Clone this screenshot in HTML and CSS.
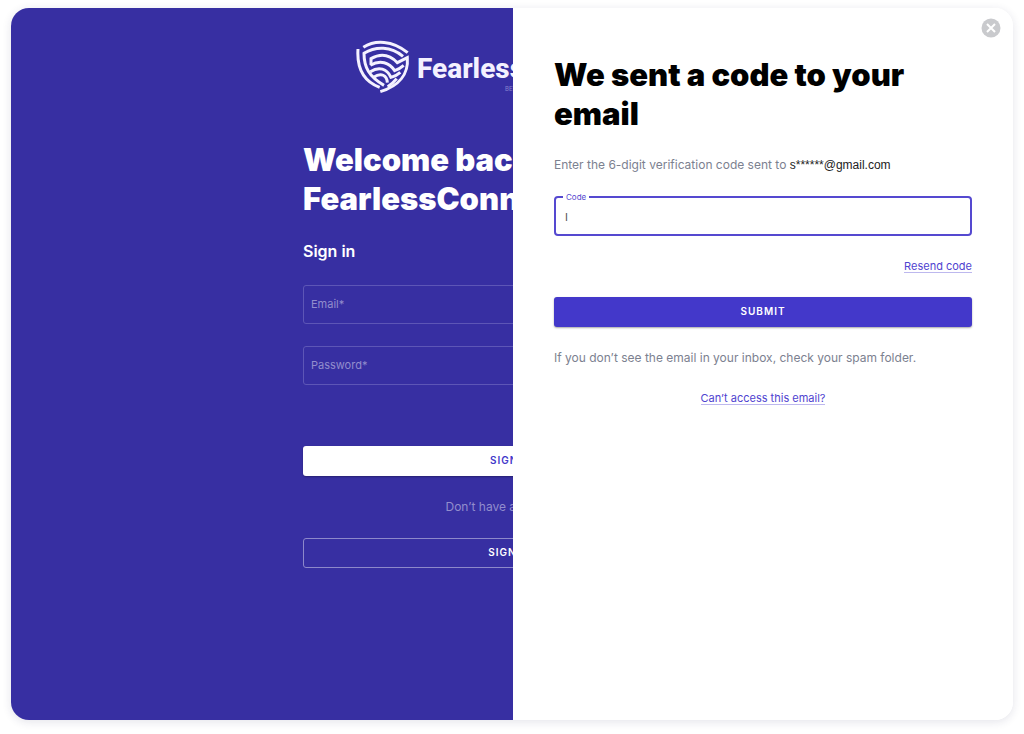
FILE: index.html
```html
<!DOCTYPE html>
<html lang="en">
<head>
<meta charset="utf-8">
<meta name="viewport" content="width=device-width, initial-scale=1">
<title>FearlessConnect</title>
<link rel="stylesheet" href="styles.css">
</head>
<body>
<div class="window">
  <main class="signin">
    <div class="column">
      <div class="brand">
        <svg class="shield" viewBox="0 0 168 174" fill="none" stroke="currentColor" stroke-width="9" aria-hidden="true">
          <path d="M25 28C60 5 112 7 158 44"/>
          <path d="M9 33C5 92 26 130 74 148"/>
          <path d="M144 55C108 24 62 24 27 46C27 88 42 116 87 142"/>
          <path d="M48 80V62C76 46 104 50 127 74L157 59C161 108 132 144 76 161"/>
          <path d="M46 82C76 64 103 74 119 98C130 95 138 89 146 82"/>
          <path d="M46 101C72 84 96 92 108 118C120 115 128 110 136 103"/>
          <path d="M56 118C78 102 96 112 97 134"/>
          <path d="M98 146C108 140 117 132 125 122"/>
        </svg>
        <div class="wordmark">
          <span class="name">FearlessConnect</span>
          <span class="tag">BETA</span>
        </div>
      </div>
      <h1 class="title">Welcome back to FearlessConnect</h1>
      <h2 class="subtitle">Sign in</h2>
      <form class="login">
        <input class="dark-field" type="email" aria-label="Email" placeholder="Email*">
        <input class="dark-field" type="password" aria-label="Password" placeholder="Password*">
        <button class="button button-white" type="submit">SIGN IN</button>
        <p class="hint">Don’t have an account?</p>
        <button class="button button-outline" type="button">SIGN UP</button>
      </form>
    </div>
  </main>
  <aside class="drawer">
    <button class="close" type="button" aria-label="Close">
      <svg viewBox="0 0 20 20" aria-hidden="true"><circle cx="10" cy="10" r="9.5" fill="#c9cacd"/><path d="M6 6L14 14M14 6L6 14" stroke="#fff" stroke-width="2"/></svg>
    </button>
    <h1 class="title">We sent a code to your email</h1>
    <p class="text">Enter the 6-digit verification code sent to <span class="address">s******@gmail.com</span></p>
    <form class="verify">
      <fieldset class="code-box">
        <legend class="code-legend"><label for="code">Code</label></legend>
        <input class="code-input" id="code" type="text" value="I">
      </fieldset>
      <a class="link resend" href="#">Resend code</a>
      <button class="button button-primary" type="submit">SUBMIT</button>
    </form>
    <p class="text spam">If you don’t see the email in your inbox, check your spam folder.</p>
    <a class="link access" href="#">Can’t access this email?</a>
  </aside>
</div>
</body>
</html>
```
FILE: styles.css
```css
* {
  box-sizing: border-box;
}

body {
  margin: 0;
  min-height: 100vh;
  padding: 8px 11px 14px;
  display: flex;
  background: #fff;
  font-family: Inter, "Liberation Sans", sans-serif;
  color: #000;
}

button,
input {
  font: inherit;
}

h1, h2, p {
  margin: 0;
}

.window {
  position: relative;
  flex: 1;
  display: flex;
  border-radius: 18px;
  background: #fff;
  box-shadow: 0 2px 10px rgba(30, 30, 80, 0.12);
}

/* Wider right-hand radii keep the page's corners behind the drawer's. */
.signin {
  flex: 1;
  display: flex;
  justify-content: center;
  border-radius: 18px 30px 30px 18px;
  background: #372fa2;
  color: #fff;
}

.column {
  width: 100%;
  max-width: 418px;
  padding-top: 30px;
}

.brand {
  display: flex;
  gap: 6px;
  padding-left: 52px;
  color: #f4f1ff;
}

.shield {
  width: 56px;
  height: 58px;
}

.wordmark {
  display: flex;
  flex-direction: column;
  padding-top: 14px;
}

.name {
  font-family: Roboto, sans-serif;
  font-size: 28px;
  font-weight: 800;
  line-height: 34px;
}

.tag {
  padding-left: 88px;
  font-size: 6px;
  line-height: 1;
  color: #8983cf;
}

.title {
  font-size: 31px;
  font-weight: 900;
  line-height: 39px;
}

.column .title {
  margin-top: 44px;
}

.subtitle {
  margin-top: 22px;
  font-size: 16px;
  font-weight: 600;
  line-height: 22px;
}

.login {
  display: flex;
  flex-direction: column;
  margin-top: 23px;
}

.dark-field {
  height: 39px;
  margin-bottom: 22px;
  padding: 0 7px 2px;
  border: 1px solid #5d56b6;
  border-radius: 3px;
  background: transparent;
  color: #fff;
  font-size: 11px;
}

.dark-field::placeholder {
  color: #928dcd;
  opacity: 1;
}

.button {
  height: 30px;
  padding: 0 0 2px;
  border: 0;
  border-radius: 3px;
  font-size: 10px;
  font-weight: 600;
  letter-spacing: 1px;
}

.button-white {
  margin-top: 39px;
  background: #fff;
  color: #4338ca;
  box-shadow: 0 1px 2px rgba(0, 0, 0, 0.3);
}

.hint {
  margin: 22px 0;
  font-size: 12px;
  line-height: 18px;
  text-align: center;
  color: #928dcd;
}

.button-outline {
  border: 1px solid #8d88ca;
  background: transparent;
  color: #fff;
}

.drawer {
  position: absolute;
  top: 0;
  right: 0;
  bottom: 0;
  width: calc(50% - 1px);
  display: flex;
  flex-direction: column;
  padding: 47px 41px;
  border-radius: 0 18px 18px 0;
  background: #fff;
}

.close {
  position: absolute;
  top: 10px;
  right: 12px;
  width: 20px;
  height: 20px;
  padding: 0;
  border: 0;
  background: none;
}

.close svg {
  display: block;
}

.text {
  font-size: 12px;
  line-height: 18px;
  color: #7c8190;
}

.title + .text {
  margin-top: 23px;
}

.address {
  font-family: "Liberation Sans", sans-serif;
  color: #222;
}

.verify {
  display: flex;
  flex-direction: column;
  margin-top: 17px;
}

.code-box {
  height: 45px;
  margin: 0;
  min-width: 0;
  padding: 0 9px;
  border: 2px solid #5549d0;
  border-radius: 4px;
}

.code-legend {
  margin-left: -2px;
  padding: 0 3px;
  font-size: 8px;
  line-height: 12px;
  color: #5549d0;
}

.code-input {
  display: block;
  width: 100%;
  height: 28px;
  padding: 0;
  border: 0;
  outline: 0;
  background: transparent;
  font-size: 11px;
  color: #555;
}

.link {
  font-size: 11px;
  line-height: 12px;
  color: #4f43d0;
  text-decoration: none;
  border-bottom: 1px solid #bdb8ee;
}

.resend {
  align-self: flex-end;
  margin-top: 24px;
}

.button-primary {
  margin-top: 24px;
  background: #4338ca;
  color: #fff;
  box-shadow: 0 1px 2px rgba(0, 0, 0, 0.35);
}

.spam {
  margin-top: 22px;
}

.access {
  align-self: center;
  margin-top: 25px;
}
```
